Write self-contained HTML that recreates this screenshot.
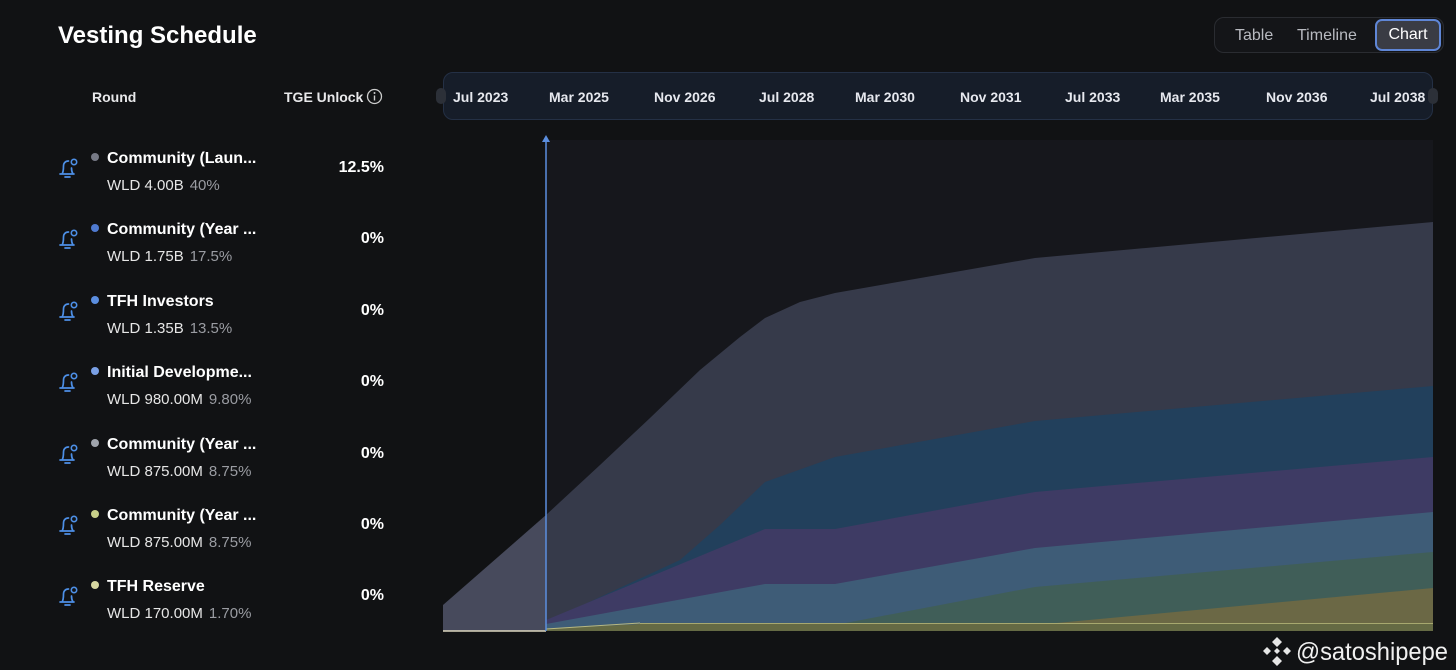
<!DOCTYPE html>
<html><head><meta charset="utf-8"><style>
*{margin:0;padding:0;box-sizing:border-box}
body{width:1456px;height:670px;background:#111214;font-family:"Liberation Sans",sans-serif;color:#fff;position:relative;overflow:hidden}
.t{position:absolute}
h1{position:absolute;left:58px;top:22px;font-size:24px;font-weight:bold}
.tabs{position:absolute;left:1214px;top:17px;width:230px;height:36px;border:1px solid #2a2c31;border-radius:10px;background:#141518}
.tabs span{position:absolute;top:9px;font-size:16px;color:#b8bac0}
.chart-btn{position:absolute;left:1375px;top:19px;width:66px;height:32px;border:2px solid #5f86d6;border-radius:7px;background:#3a3c44;font-size:16px;text-align:center;line-height:28px}
.hdr{font-size:14px;font-weight:bold;color:#e8e8ea;top:89px}
.axis{position:absolute;left:443px;top:72px;width:990px;height:48px;background:#161d29;border:1px solid #243045;border-radius:10px}
.axis span{position:absolute;top:16px;font-size:14px;font-weight:bold;color:#e6e8ee}
.row .n{position:absolute;left:107px;font-size:16px;font-weight:bold}
.row .s{position:absolute;left:107px;font-size:15px;color:#e6e6e6}
.row .s i{font-style:normal;color:#9a9ca2;margin-left:6px}
.row .p{position:absolute;right:1072px;font-size:16px;font-weight:bold}
.dot{position:absolute;left:91px;width:8px;height:8px;border-radius:50%}
.bell{position:absolute;left:57px}
.grip{position:absolute;top:88px;width:10px;height:16px;border-radius:5px;background:#2c3038}
</style></head><body>
<h1>Vesting Schedule</h1>
<div class="tabs"><span style="left:20px">Table</span><span style="left:82px">Timeline</span></div>
<div class="chart-btn">Chart</div>
<div class="t hdr" style="left:92px">Round</div>
<div class="t hdr" style="left:284px">TGE Unlock</div>
<svg class="t" style="left:366px;top:88px" width="17" height="17" viewBox="0 0 17 17"><circle cx="8.5" cy="8.5" r="7" fill="none" stroke="#ccc" stroke-width="1.3"/><circle cx="8.5" cy="5" r="1" fill="#ccc"/><path d="M8.5 7.5v5" stroke="#ccc" stroke-width="1.4"/></svg>
<div class="axis">
<span style="left:9px">Jul 2023</span><span style="left:105px">Mar 2025</span><span style="left:210px">Nov 2026</span><span style="left:315px">Jul 2028</span><span style="left:411px">Mar 2030</span><span style="left:516px">Nov 2031</span><span style="left:621px">Jul 2033</span><span style="left:716px">Mar 2035</span><span style="left:822px">Nov 2036</span><span style="left:926px">Jul 2038</span>
</div>
<div class="grip" style="left:436px"></div><div class="grip" style="left:1428px"></div>

<div id="rows"></div>
<svg class="t" style="left:0;top:0" width="1456" height="670">
<rect x="546" y="140" width="887" height="491" fill="#16171c"/>
<polygon fill="#474a5c" points="443,631 443,605 546,515 546,631"/>
<polygon fill="#363a4a" points="546,631 546,515 600,465 650,418 700,370 740,337 765,318 800,302 835,293 1035,258 1433,222 1433,631"/>
<polygon fill="#22405c" points="546,631 546,622 680,560 720,525 765,482 835,457 1035,421 1433,386 1433,631"/>
<polygon fill="#3e3b64" points="546,631 546,620 765,529 835,529 1035,492 1433,457 1433,631"/>
<polygon fill="#3e5c77" points="546,631 546,624 765,584 835,584 1035,548 1433,512 1433,631"/>
<polygon fill="#405e58" points="835,631 835,625 1035,587 1433,552 1433,631"/>
<polygon fill="#6b6845" points="1035,631 1035,625 1433,588 1433,631"/>
<polygon fill="#656a44" points="443,631 546,631 546,629 640,624 1433,624 1433,631"/>
<line x1="546" y1="629" x2="640" y2="623" stroke="#b8b880" stroke-width="1"/>
<line x1="640" y1="623.5" x2="1433" y2="623.5" stroke="#a7a86f" stroke-width="1"/>
<line x1="443" y1="631" x2="546" y2="631" stroke="#ddd8c0" stroke-width="1.5"/>
<line x1="546" y1="138" x2="546" y2="631" stroke="#5b8ede" stroke-width="1.5"/>
<polygon points="542,142 550,142 546,135" fill="#5b8ede"/>
<g fill="#e6e6e6"><path d="M1277 637l5 5-5 5-5-5z M1267 647l4 4-4 4-4-4z M1287 647l4 4-4 4-4-4z M1277 656l5 5-5 5-5-5z M1277 648l3 3-3 3-3-3z"/></g>
<text x="1296" y="660" font-family="Liberation Sans" font-size="25" fill="#f0f0f0" textLength="152" lengthAdjust="spacingAndGlyphs">@satoshipepe</text>
</svg>
<script>
var d=[["Community (Laun...","WLD 4.00B","40%","12.5%","#777a86"],["Community (Year ...","WLD 1.75B","17.5%","0%","#4f7ad0"],["TFH Investors","WLD 1.35B","13.5%","0%","#5b8ee0"],["Initial Developme...","WLD 980.00M","9.80%","0%","#7aa0e6"],["Community (Year ...","WLD 875.00M","8.75%","0%","#a0a4ac"],["Community (Year ...","WLD 875.00M","8.75%","0%","#c8d08a"],["TFH Reserve","WLD 170.00M","1.70%","0%","#d6d6a0"]];
var h='';d.forEach(function(r,i){var y=150+i*71.4;
h+='<div class="row"><svg class="bell" style="top:'+(y+6)+'px" width="24" height="24" viewBox="0 0 24 24"><path d="M3 18h14M5 18c1.5-2 1.5-5 1.5-8 0-3 2-5 5-5M16 18c-1.2-2-1.5-4-1.5-6M8 21h5" fill="none" stroke="#4d8fe6" stroke-width="1.7" stroke-linecap="round"/><circle cx="17" cy="6" r="2.7" fill="none" stroke="#4d8fe6" stroke-width="1.6"/></svg><div class="dot" style="top:'+(y+3)+'px;background:'+r[4]+'"></div><div class="n" style="top:'+y+'px">'+r[0]+'</div><div class="s" style="top:'+(y+27)+'px">'+r[1]+'<i>'+r[2]+'</i></div><div class="p" style="top:'+(y+9)+'px">'+r[3]+'</div></div>';});
document.getElementById('rows').innerHTML=h;
</script>
</body></html>
